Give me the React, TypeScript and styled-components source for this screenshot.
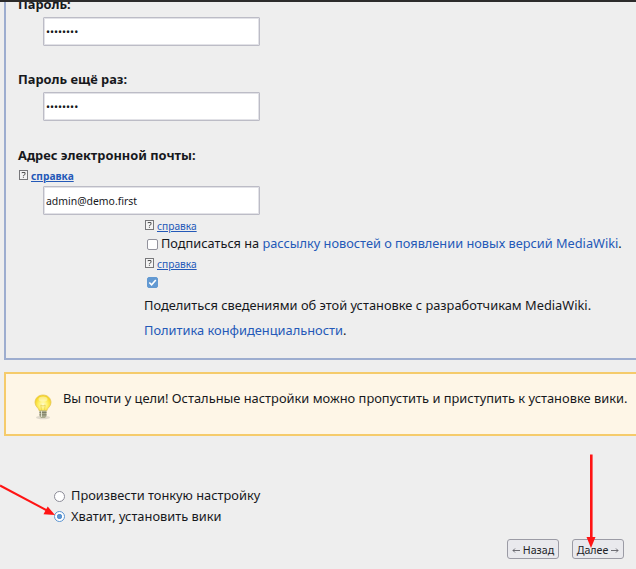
import React from "react";
import styled, { createGlobalStyle } from "styled-components";

const GlobalStyle = createGlobalStyle`
  * { box-sizing: border-box; }
  body {
    margin: 0;
    background: #eeeeee;
    color: #16181c;
    font-family: "Noto Sans", sans-serif;
    overflow: hidden;
  }
`;

const Page = styled.main`
  position: relative;
  width: 636px;
  height: 569px;
  overflow: hidden;
  background: #eeeeee;
  border-top: 2px solid #2c2b2b;
`;

const Panel = styled.section`
  width: 650px;
  height: 358px;
  margin-left: 4px;
  padding-left: 12px;
  overflow: hidden;
  border: 2px solid #9dadcf;
  border-top: 0;
`;

const Line = styled.div<{ $gap?: number; $size?: number; $bold?: boolean }>`
  display: flex;
  align-items: center;
  height: 16px;
  margin-top: ${(p) => p.$gap ?? 0}px;
  font-size: ${(p) => p.$size ?? 12.84}px;
  font-weight: ${(p) => (p.$bold ? 700 : 400)};
  line-height: 16px;
  white-space: pre;
`;

const Field = styled.input<{ $gap: number; $secret?: boolean }>`
  display: block;
  width: 217px;
  height: 29px;
  margin: ${(p) => p.$gap}px 0 0 25px;
  padding: 0 0 0 2px;
  border: 1px solid #bcbcc6;
  box-shadow: inset 0 0 0 1px #e2e2e7;
  border-radius: 1px;
  background: #fff;
  color: #16181c;
  font: ${(p) => (p.$secret ? "10.7px" : "10.45px")} "Noto Sans", sans-serif;
  outline: 0;
`;

const Options = styled.div`
  padding-left: 126px;
`;

const Link = styled.a<{ $underlined?: boolean }>`
  color: #2459b8;
  text-decoration: ${(p) => (p.$underlined ? "underline" : "none")};
  text-underline-offset: 1px;
`;

const HelpMark = styled.svg`
  width: 9px;
  height: 10px;
  margin: -2px 3px 0 1px;
  flex: none;
`;

const Check = styled.span<{ $checked?: boolean }>`
  display: flex;
  width: 11px;
  height: 11px;
  flex: none;
  margin: 3px 3px 0 3px;
  border: 1px solid ${(p) => (p.$checked ? "#6299d2" : "#92929c")};
  border-radius: 2px;
  background: ${(p) => (p.$checked ? "#6299d2" : "#fff")};
`;

const Notice = styled.section`
  display: flex;
  width: 650px;
  height: 64px;
  margin: 12px 0 0 4px;
  padding-left: 27px;
  border: 2px solid #f5cb6b;
  background: #fef6e7;
`;

const Bulb = styled.svg`
  width: 18px;
  height: 26px;
  margin: 20px 11px 0 1px;
  flex: none;
`;

const Choices = styled.div`
  padding: 51px 0 0 54px;
`;

const Radio = styled.span<{ $selected?: boolean }>`
  width: 11px;
  height: 11px;
  flex: none;
  margin: ${(p) => (p.$selected ? 1 : 3)}px 6px 0 0;
  border: 1px solid ${(p) => (p.$selected ? "#5b95d2" : "#8c8c98")};
  border-radius: 50%;
  background: ${(p) => (p.$selected ? "radial-gradient(circle, #5b95d2 0 2.2px, #fff 3px)" : "#fff")};
`;

const Actions = styled.div`
  display: flex;
  gap: 13px;
  margin: 15px 0 0 507px;
`;

const Button = styled.button`
  width: 52px;
  height: 20px;
  padding: 1px 0 0;
  border: 1px solid #9b9ba5;
  border-radius: 3px;
  background: #e9e9ed;
  color: #202126;
  font: 10.6px/18px "Noto Sans", sans-serif;
  white-space: nowrap;
  display: flex;
  align-items: center;
  justify-content: center;
  gap: 3px;
`;

const ButtonArrow = styled.svg`
  width: 8px;
  height: 5px;
  margin-top: 1px;
`;

const Pointers = styled.svg`
  position: absolute;
  left: 0;
  top: -2px;
  width: 636px;
  height: 569px;
  pointer-events: none;
`;

const Help = ({ gap, bold }: { gap: number; bold?: boolean }) => (
  <Line $gap={gap} $size={10.2} $bold={bold}>
    <HelpMark viewBox="0 0 9 10">
      <rect x=".5" y=".5" width="8" height="9" fill="#f4f4f4" stroke="#77777a" />
      <path d="M3 3.2V2.5H6V4.5L4.4 5.5V6.3M4.4 7.2V8" fill="none" stroke="#555" />
    </HelpMark>
    <Link $underlined>справка</Link>
  </Line>
);

const Arrow = ({ left }: { left?: boolean }) => (
  <ButtonArrow viewBox="0 0 8 5">
    <path
      d={left ? "M8 2.5H1M3 .5L1 2.5L3 4.5" : "M0 2.5H7M5 .5L7 2.5L5 4.5"}
      fill="none"
      stroke="#606066"
      strokeWidth=".9"
    />
  </ButtonArrow>
);

export default function App() {
  return (
    <Page>
      <GlobalStyle />
      <Panel>
        <Line $gap={-6} $bold>Пароль:</Line>
        <Field $gap={5} type="password" defaultValue="password" $secret />
        <Line $gap={25} $bold>Пароль ещё раз:</Line>
        <Field $gap={5} type="password" defaultValue="password" $secret />
        <Line $gap={26} $bold>Адрес электронной почты:</Line>
        <Help gap={5} bold />
        <Field $gap={2} defaultValue="admin@demo.first" />
        <Options>
          <Help gap={3} />
          <Line $gap={1} $size={12.77}>
            <Check />
            Подписаться на <Link>рассылку новостей о появлении новых версий MediaWiki</Link>.
          </Line>
          <Help gap={5} />
          <Line $gap={1}>
            <Check $checked>
              <svg width="9" height="9" viewBox="0 0 9 9">
                <path d="M1.3 4.5L3.6 6.8L7.8 2" fill="none" stroke="#fff" strokeWidth="1.6" />
              </svg>
            </Check>
          </Line>
          <Line $gap={8}>Поделиться сведениями об этой установке с разработчикам MediaWiki.</Line>
          <Line $gap={9}><Link>Политика конфиденциальности</Link>.</Line>
        </Options>
      </Panel>
      <Notice>
        <Bulb viewBox="0 0 18 26">
          <defs>
            <radialGradient id="glow" cx=".5" cy=".6" r=".55">
              <stop offset="0" stopColor="#fffbd0" />
              <stop offset=".5" stopColor="#fff16b" />
              <stop offset="1" stopColor="#f5d320" />
            </radialGradient>
          </defs>
          <ellipse cx="9" cy="23.5" rx="7" ry="1.8" fill="#cfc9bd" opacity=".65" />
          <path d="M9 1C4.3 1 1 4.3 1 8.6C1 12.5 4.7 13.7 5.4 17H12.6C13.3 13.7 17 12.5 17 8.6C17 4.3 13.7 1 9 1Z" fill="url(#glow)" stroke="#e5c65a" strokeWidth=".8" />
          <ellipse cx="9" cy="5" rx="4.5" ry="2.6" fill="#fff" opacity=".4" />
          <path d="M7.5 16L6.8 11L9 12L11.2 11L10.5 16" fill="none" stroke="#e7cf55" strokeWidth=".8" />
          <path d="M5.5 16.5H12.5V22L11 24H7L5.5 22Z" fill="#a9aa8e" />
          <path d="M5.5 18.5H12.5M5.5 20.8H12.5" stroke="#73755f" strokeWidth=".8" />
          <path d="M7.5 17V23" stroke="#e0e1cd" />
        </Bulb>
        <Line $gap={16} $size={12.87}>Вы почти у цели! Остальные настройки можно пропустить и приступить к установке вики.</Line>
      </Notice>
      <Choices>
        <Line><Radio />Произвести тонкую настройку</Line>
        <Line $gap={5}><Radio $selected />Хватит, установить вики</Line>
      </Choices>
      <Actions>
        <Button><Arrow left />Назад</Button>
        <Button>Далее<Arrow /></Button>
      </Actions>
      <Pointers viewBox="0 0 636 569">
        <g fill="#ff1414" stroke="#ff1414">
          <path d="M0 485.5L48 511" strokeWidth="2" />
          <path d="M55 515L43.5 514.2L47.7 506.5Z" stroke="none" />
          <path d="M591.3 454.5V540" strokeWidth="2.6" />
          <path d="M591 548L586.5 537H595.5Z" stroke="none" />
        </g>
      </Pointers>
    </Page>
  );
}
